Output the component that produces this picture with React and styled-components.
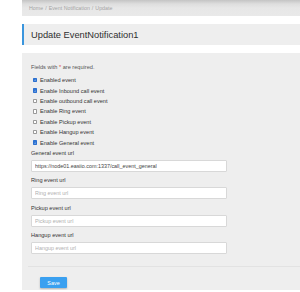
import React from 'react';
import styled, { createGlobalStyle } from 'styled-components';

const GlobalStyle = createGlobalStyle`
  html, body {
    margin: 0;
    padding: 0;
    overflow: hidden;
    background: #ffffff;
    font-family: "Liberation Sans", Arial, sans-serif;
  }
`;

const Page = styled.div`
  display: flex;
  width: 300px;
  height: 292px;
  overflow: hidden;
  background: #ffffff;
`;

const Sidebar = styled.div`
  width: 22px;
  flex: none;
  background: #ffffff;
`;

const Main = styled.div`
  flex: 1;
  min-width: 0;
  display: flex;
  flex-direction: column;
  background: #ffffff;
`;

const Breadcrumb = styled.div`
  height: 16px;
  line-height: 17px;
  padding-left: 7px;
  font-size: 5.3px;
  color: #a3a3a3;
  background: linear-gradient(#c4c4c4 0, #dedede 4px, #e7e7e7 8px, #e9e9e9);
  white-space: nowrap;

  span {
    margin: 0 2px;
  }
`;

const Header = styled.div`
  margin-top: 8px;
  height: 21px;
  line-height: 22px;
  background: #eeeeee;
  border-left: 2px solid #3a95dd;
  padding-left: 7px;
  font-size: 9.3px;
  color: #2f2f2f;
  white-space: nowrap;
`;

const Panel = styled.div`
  margin-top: 8px;
  height: 237px;
  background: #eeeeee;
  padding: 10px 9px 0;
  box-sizing: border-box;
  overflow: hidden;
  font-size: 5.6px;
  color: #333333;
`;

const Note = styled.div`
  height: 8px;
  line-height: 8px;
  margin-bottom: 4px;
  color: #555555;

  b {
    font-weight: normal;
    color: #e04848;
  }
`;

const CheckRow = styled.label`
  display: flex;
  align-items: center;
  height: 10.4px;
  white-space: nowrap;
`;

const Box = styled.span`
  width: 4.5px;
  height: 4.5px;
  margin: 0 3px 0 1.5px;
  box-sizing: border-box;
  border-radius: 0.8px;
  border: 0.6px solid ${(p) => (p.checked ? '#2b6fcf' : '#9a9a9a')};
  background: ${(p) => (p.checked ? '#2f76d6' : '#ffffff')};
  display: flex;
  align-items: center;
  justify-content: center;

  svg {
    width: 4px;
    height: 4px;
  }
`;

const Field = styled.div`
  display: flex;
  flex-direction: column;
  margin-top: ${(p) => (p.first ? '1.2px' : '4.5px')};
`;

const FieldLabel = styled.div`
  height: 8px;
  line-height: 8px;
  margin-bottom: 3px;
  color: #333333;
`;

const Input = styled.input`
  width: 196px;
  height: 12px;
  box-sizing: border-box;
  border: 0.7px solid #d8d8d8;
  border-radius: 1px;
  background: #ffffff;
  padding: 0 3px;
  margin: 0;
  font-family: "Liberation Sans", Arial, sans-serif;
  font-size: 5.4px;
  color: #444444;
  outline: none;

  &::placeholder {
    color: #b0b0b0;
  }
`;

const Divider = styled.div`
  height: 1px;
  margin-top: 12px;
  margin-left: -3px;
  margin-right: -9px;
  background: #e2e2e2;
`;

const SaveButton = styled.button`
  display: block;
  margin: 10px 0 0 9px;
  width: 27px;
  height: 11px;
  border: none;
  border-radius: 1px;
  background: #3aa0f0;
  box-shadow: 0 1px 2px rgba(0, 0, 0, 0.25);
  color: #ffffff;
  font-family: "Liberation Sans", Arial, sans-serif;
  font-size: 5.4px;
  padding: 0;
`;

const checks = [
  ['Enabled event', true],
  ['Enable Inbound call event', true],
  ['Enable outbound call event', false],
  ['Enable Ring event', false],
  ['Enable Pickup event', false],
  ['Enable Hangup event', false],
  ['Enable General event', true],
];

const fields = [
  ['General event url', 'https://node01.easiio.com:1337/call_event_general'],
  ['Ring event url', ''],
  ['Pickup event url', ''],
  ['Hangup event url', ''],
];

const Check = () => (
  <svg viewBox="0 0 10 10" aria-hidden="true">
    <polyline points="2 5.2 4.2 7.4 8 2.8" fill="none" stroke="#fff" strokeWidth="1.8" />
  </svg>
);

export default function App() {
  return (
    <>
      <GlobalStyle />
      <Page>
        <Sidebar />
        <Main>
          <Breadcrumb>
            Home<span>/</span>Event Notification<span>/</span>Update
          </Breadcrumb>
          <Header>Update EventNotification1</Header>
          <Panel>
            <Note>
              Fields with <b>*</b> are required.
            </Note>
            {checks.map(([label, on]) => (
              <CheckRow key={label}>
                <Box checked={on}>{on && <Check />}</Box>
                {label}
              </CheckRow>
            ))}
            {fields.map(([label, value], i) => (
              <Field key={label} first={i === 0}>
                <FieldLabel>{label}</FieldLabel>
                <Input defaultValue={value} placeholder={label} />
              </Field>
            ))}
            <Divider />
            <SaveButton>Save</SaveButton>
          </Panel>
        </Main>
      </Page>
    </>
  );
}
